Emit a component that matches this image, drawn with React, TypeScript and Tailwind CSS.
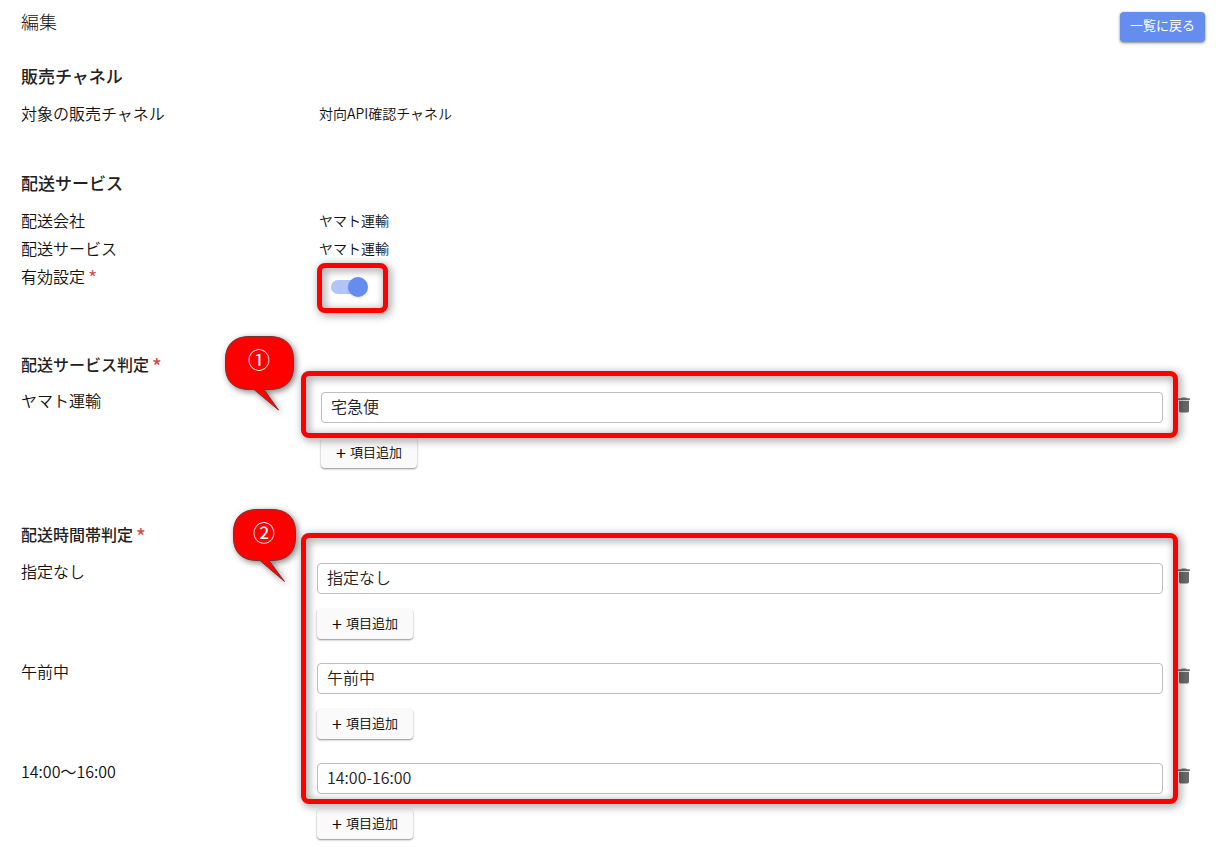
import { useState } from "react";
import type { ReactNode } from "react";
import clsx from "clsx";

type Judgement = { id: string; label: string; value: string };

const serviceRows: Judgement[] = [{ id: "yamato", label: "ヤマト運輸", value: "宅急便" }];

const timeRows: Judgement[] = [
	{ id: "none", label: "指定なし", value: "指定なし" },
	{ id: "morning", label: "午前中", value: "午前中" },
	{ id: "afternoon", label: "14:00～16:00", value: "14:00-16:00" },
];

function Required() {
	return <span className="ml-[3px] align-[-3px] text-xl leading-none text-[#d0504a]">*</span>;
}

function SectionTitle({ children, small }: { children: ReactNode; small?: boolean }) {
	return (
		<h2
			className={clsx(
				"font-medium text-[#212121]",
				small ? "h-6 text-base leading-[22px]" : "text-[17px] leading-6",
			)}
		>
			{children}
		</h2>
	);
}

function InfoRow({ label, value }: { label: string; value: string }) {
	return (
		<div className="flex pb-0.5 leading-[26px]">
			<dt className="w-[296px] shrink-0">{label}</dt>
			<dd className="pl-0.5 text-sm leading-[26px]">{value}</dd>
		</div>
	);
}

// Red frame laid over the part of the form being explained
function Marker({ className }: { className: string }) {
	return (
		<div
			className={clsx(
				"pointer-events-none absolute z-10 rounded-lg border-5 border-[#ff0000] drop-shadow-[2px_2px_4px_rgba(0,0,0,0.5)]",
				className,
			)}
		/>
	);
}

function Callout({ path, width, className, children }: { path: string; width: number; className: string; children: ReactNode }) {
	return (
		<div className={clsx("pointer-events-none absolute z-10", className)}>
			<svg
				width={width}
				height="76"
				viewBox={`0 0 ${width} 76`}
				className="block overflow-visible drop-shadow-[2px_2px_3px_rgba(0,0,0,0.5)]"
				aria-hidden="true"
			>
				<path d={path} fill="#ff0000" stroke="#7c3030" strokeWidth="1" />
			</svg>
			<span className="absolute inset-x-0 top-0 text-center text-[22px] font-normal leading-11 text-white">{children}</span>
		</div>
	);
}

function TrashButton() {
	return (
		<button type="button" aria-label="削除" className="mt-[3px] size-5 shrink-0 text-[#6b6b6b]">
			<svg viewBox="0 0 24 24" className="size-5" fill="currentColor" aria-hidden="true">
				<path d="M6 19c0 1.1.9 2 2 2h8c1.1 0 2-.9 2-2V7H6v12zM19 4h-3.5l-1-1h-5l-1 1H5v2h14V4z" />
			</svg>
		</button>
	);
}

function JudgementRow({ row, inset, children }: { row: Judgement; inset?: boolean; children?: ReactNode }) {
	const [value, setValue] = useState(row.value);

	return (
		<div className="flex">
			<label htmlFor={row.id} className="w-[296px] shrink-0 leading-[26px]">
				{row.label}
			</label>
			<div className="min-w-0 flex-1 pt-[5px]">
				<div className="flex items-start gap-[11px]">
					<div className={clsx("relative flex-1", inset && "pl-1")}>
						<input
							id={row.id}
							type="text"
							value={value}
							onChange={(e) => setValue(e.target.value)}
							className="block h-[31px] w-full rounded border border-[#bdbdbd] bg-white px-[9px] pb-[3px] text-base text-[#212121] outline-none"
						/>
						{children}
					</div>
					<TrashButton />
				</div>
				<div className={clsx("mt-[15px]", inset && "pl-1")}>
					<button
						type="button"
						className="flex h-[30px] w-24 items-center justify-center gap-1 rounded bg-[#fafafa] pb-0.5 text-[13px] text-black shadow-[0_1px_2px_rgba(0,0,0,0.45)]"
					>
						<span className="text-lg leading-none">+</span>
						項目追加
					</button>
				</div>
			</div>
		</div>
	);
}

export default function App() {
	const [enabled, setEnabled] = useState(true);

	return (
		<main className="bg-white pb-2 pl-[21px] pr-7 pt-3 font-['Noto_Sans_CJK_JP',sans-serif] text-base font-[350] text-[#111111]">
			<header className="-mr-[11px] flex items-start justify-between">
				<h1 className="text-lg font-light leading-[18px]">編集</h1>
				<button
					type="button"
					className="h-[30px] w-[85px] rounded bg-[#648def] pb-1 text-[13px] font-normal text-white shadow-[0_1px_3px_rgba(0,0,0,0.5)]"
				>
					一覧に戻る
				</button>
			</header>

			<section className="mt-[22px]">
				<SectionTitle>販売チャネル</SectionTitle>
				<dl className="mt-3">
					<InfoRow label="対象の販売チャネル" value="対向API確認チャネル" />
				</dl>
			</section>

			<section className="mt-[43px]">
				<SectionTitle>配送サービス</SectionTitle>
				<dl className="mt-3">
					<InfoRow label="配送会社" value="ヤマト運輸" />
					<InfoRow label="配送サービス" value="ヤマト運輸" />
				</dl>
				<div className="flex">
					<label htmlFor="enabled" className="w-[296px] shrink-0 leading-[26px]">
						有効設定
						<Required />
					</label>
					<div className="relative flex h-[50px] w-[71px] items-center pb-0.5 pl-3.5">
						<input
							id="enabled"
							type="checkbox"
							role="switch"
							checked={enabled}
							onChange={(e) => setEnabled(e.target.checked)}
							className="relative h-3.5 w-[34px] appearance-none rounded-full bg-gray-400 before:absolute before:-left-[3px] before:-top-[3px] before:size-5 before:rounded-full before:bg-gray-50 before:shadow-sm checked:bg-[#b1c6f7] checked:before:left-[17px] checked:before:bg-[#648def]"
						/>
						<Marker className="inset-0" />
					</div>
				</div>
			</section>

			<section className="mt-10">
				<SectionTitle small>
					配送サービス判定
					<Required />
				</SectionTitle>
				<div className="mt-2.5">
					{serviceRows.map((row) => (
						<JudgementRow key={row.id} row={row} inset>
							<Marker className="-bottom-[15px] -left-4 -right-[15px] -top-[21px]" />
							<Callout
								className="-left-[92px] -top-14"
								width={68}
								path="M24 .5H45C60 .5 68.500 9 68.500 23V31C68.500 45 60 53.500 45 53.500H39L53.500 74L29 53.500H24C9 53.500 .5 45 .5 31V23C.5 9 9 .5 24 .5Z"
							>
								①
							</Callout>
						</JudgementRow>
					))}
				</div>
			</section>

			<section className="mt-[55px]">
				<SectionTitle small>
					配送時間帯判定
					<Required />
				</SectionTitle>
				<div className="relative mt-[11px] flex flex-col gap-[19px]">
					{timeRows.map((row) => (
						<JudgementRow key={row.id} row={row} />
					))}
					<Marker className="-top-[25px] bottom-[35px] left-[280px] right-4" />
					<Callout
						className="-top-[49px] left-[212px]"
						width={62}
						path="M24 .5H39C54 .5 62.500 9 62.500 23V29C62.500 43 54 51.500 39 51.500H36L51.500 72.500L27 51.500H24C9 51.500 .5 43 .5 29V23C.5 9 9 .5 24 .5Z"
					>
						②
					</Callout>
				</div>
			</section>
		</main>
	);
}
